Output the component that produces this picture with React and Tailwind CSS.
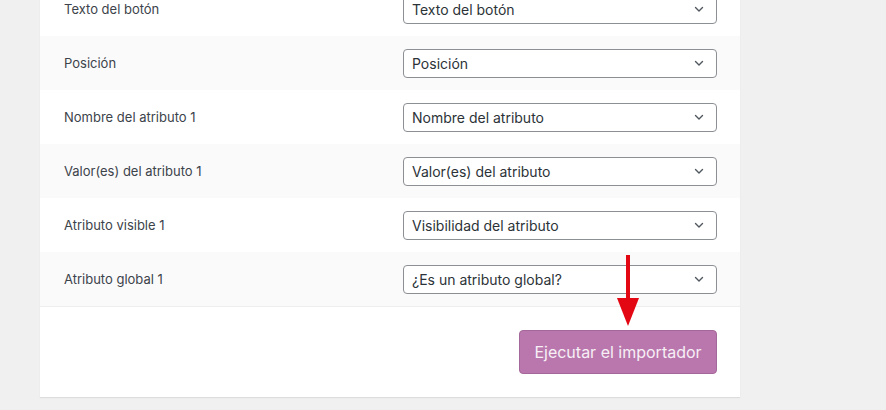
import React from "react";

const rows = [
  { label: "Texto del botón", value: "Texto del botón" },
  { label: "Posición", value: "Posición" },
  { label: "Nombre del atributo 1", value: "Nombre del atributo" },
  { label: "Valor(es) del atributo 1", value: "Valor(es) del atributo" },
  { label: "Atributo visible 1", value: "Visibilidad del atributo" },
  { label: "Atributo global 1", value: "¿Es un atributo global?" },
];

const Chevron = () => (
  <svg width="12" height="12" viewBox="0 0 12 12" fill="none">
    <path d="M2.5 4.5 6 8l3.5-3.5" stroke="#50575e" strokeWidth="1.4" strokeLinecap="round" strokeLinejoin="round" />
  </svg>
);

const App = () => {
  return (
    <div
      className="w-[886px] h-[410px] overflow-hidden bg-[#f0f0f1] relative"
      style={{ fontFamily: "Inter, 'Noto Sans', sans-serif" }}
    >
      <div className="ml-[40px] w-[700px] -mt-[18px] bg-white shadow-[0_1px_1px_rgba(0,0,0,0.08)]">
        {rows.map((row, i) => (
          <div
            key={row.label}
            className={`h-[54px] flex items-center ${i % 2 === 1 ? "bg-[#fafafa]" : "bg-white"}`}
          >
            <div className="w-[363px] pl-[24px] pt-[2px] text-[13px] text-[#3c434a]">{row.label}</div>
            <div className="w-[314px] h-[29px] border border-[#8c8f94] rounded-[4px] bg-white flex items-center justify-between pl-[8px] pr-[11px] text-[14px] text-[#2c3338]">
              <span>{row.value}</span>
              <Chevron />
            </div>
          </div>
        ))}
        <div className="border-t border-[#eeeeee] h-[91px] flex justify-end items-start pt-[23px] pr-[23px]">
          <button className="w-[198px] h-[44px] rounded-[4px] bg-[#b977ad] border border-[#a5689b] text-[16px] text-[#f7eff6]">
            Ejecutar el importador
          </button>
        </div>
      </div>
      <svg className="absolute left-[614px] top-[255px]" width="28" height="72" viewBox="0 0 28 72">
        <rect x="12" y="0" width="4" height="46" fill="#e30613" />
        <path d="M3 43h22L14 71z" fill="#e30613" />
      </svg>
    </div>
  );
};

export default App;
